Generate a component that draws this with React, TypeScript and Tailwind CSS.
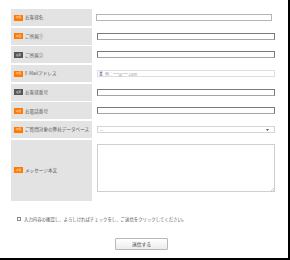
import React from "react";

type Field = {
  label: string;
  required: boolean;
  kind: "text" | "email" | "select" | "textarea";
  tone?: "light" | "dark" | "pale";
};

const fields: Field[] = [
  { label: "お客様名", required: true, kind: "text", tone: "light" },
  { label: "ご所属①", required: true, kind: "text", tone: "dark" },
  { label: "ご所属②", required: false, kind: "text", tone: "dark" },
  { label: "E-Mailアドレス", required: true, kind: "email" },
  { label: "お客様番号", required: false, kind: "text", tone: "dark" },
  { label: "お電話番号", required: true, kind: "text", tone: "dark" },
  { label: "ご質問対象の弊社データベース", required: true, kind: "select" },
  { label: "メッセージ本文", required: true, kind: "textarea" },
];

const font = { fontFamily: '"Noto Sans CJK JP", "Noto Sans", sans-serif' };

const Badge: React.FC<{ required: boolean }> = ({ required }) => (
  <span
    className={
      "flex h-[6px] w-[9px] shrink-0 items-center justify-center text-[2.5px] leading-none text-white " +
      (required ? "bg-[#ff7a00]" : "bg-[#555555]")
    }
  >
    {required ? "必須" : "任意"}
  </span>
);

const Control: React.FC<{ f: Field; first: boolean }> = ({ f, first }) => {
  if (f.kind === "textarea") {
    return (
      <div className="relative h-[48px] w-[178px] border border-[#cfcfcf] bg-white">
        <svg className="absolute bottom-0 right-0" width="4" height="4" viewBox="0 0 4 4">
          <path d="M4 1L1 4M4 3L3 4" stroke="#aaa" strokeWidth="0.6" />
        </svg>
      </div>
    );
  }
  if (f.kind === "select") {
    return (
      <div className="flex h-[7px] w-[178px] items-center justify-between border border-[#d4d4d4] bg-white pl-[2px] pr-[5px]">
        <span className="text-[4px] leading-none text-[#333]">--</span>
        <svg width="3" height="2" viewBox="0 0 3 2">
          <path d="M0 0H3L1.5 2Z" fill="#555" />
        </svg>
      </div>
    );
  }
  if (f.kind === "email") {
    return (
      <div className="flex h-[7px] w-[178px] items-center gap-[2px] border border-[#dedede] bg-white pl-[1px]">
        <svg width="4" height="5" viewBox="0 0 4 5">
          <rect x="0" y="0" width="4" height="5" fill="#e4e0f0" />
          <circle cx="2" cy="1.6" r="0.9" fill="#6f63b8" />
          <path d="M0.6 4.4C0.8 3.2 3.2 3.2 3.4 4.4Z" fill="#6f63b8" />
        </svg>
        <span className="text-[4px] leading-none text-[#9a9a9a]">例：***@***.com</span>
      </div>
    );
  }
  return (
    <div
      className={
        "h-[7px] bg-white border " +
        (first ? "ml-[-1px] w-[176px] border-[#b4b4b4]" : "w-[178px] ") +
        (f.tone === "dark" ? "border-[#7a7a7a] border-b-[#a5a5a5]" : "")
      }
    />
  );
};

export default function App() {
  return (
    <div
      className="h-[260px] w-[290px] overflow-hidden border-b-2 border-r-2 border-black bg-white"
      style={font}
    >
      <div className="flex w-[267px] flex-col gap-[1.7px] pl-[11px] pt-[9px]">
        {fields.map((f, i) => (
          <div
            key={f.label}
            className={"flex " + (f.kind === "textarea" ? "h-[61px]" : "h-[17px]")}
          >
            <div className="flex w-[81px] shrink-0 items-center gap-[2px] bg-[#e3e3e3] pl-[3px]">
              <Badge required={f.required} />
              <span className="whitespace-nowrap text-[4.6px] leading-none text-[#5a5a5a]">
                {f.label}
              </span>
            </div>
            <div
              className={
                "flex flex-1 pl-[5px] " +
                (f.kind === "textarea" ? "items-start pt-[4px]" : "items-center")
              }
            >
              <Control f={f} first={i === 0} />
            </div>
          </div>
        ))}
      </div>

      <div className="mt-[16px] flex items-center gap-[3px] pl-[17px]">
        <span className="h-[4px] w-[4px] border border-[#8a8a8a] bg-white" />
        <span className="whitespace-nowrap text-[4.4px] leading-none text-[#555555]">
          入力内容の確認し、よろしければチェックをし、ご送信をクリックしてください。
        </span>
      </div>

      <div className="mt-[17px] flex w-[283px] justify-center">
        <button className="flex h-[12px] w-[53px] items-center justify-center rounded-[1px] border border-[#b8b8b8] bg-gradient-to-b from-[#ffffff] to-[#ececec] text-[4.8px] leading-none text-[#333]">
          送信する
        </button>
      </div>
    </div>
  );
}
